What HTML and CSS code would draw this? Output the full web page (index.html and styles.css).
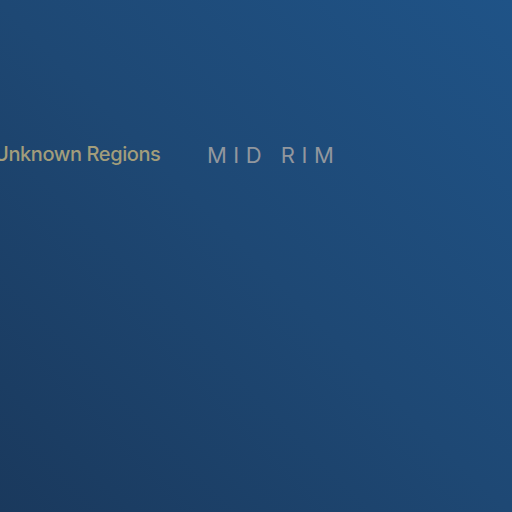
FILE: index.html
```html
<!DOCTYPE html>
<html>
<head>
<meta charset="utf-8">
<link rel="stylesheet" href="styles.css">
</head>
<body>
<div class="map">
  <span class="label region">Unknown Regions</span>
  <span class="label rim">MID RIM</span>
</div>
</body>
</html>
```
FILE: styles.css
```css
html, body { margin: 0; padding: 0; }
body { width: 512px; height: 512px; overflow: hidden; }
.map {
  position: relative;
  width: 512px;
  height: 512px;
  background: linear-gradient(to top right, #1a395d 0%, #1e4874 50%, #1f5387 100%);
  font-family: Inter, "Noto Sans", sans-serif;
}
.label { position: absolute; white-space: nowrap; line-height: 1; }
.region {
  left: -6px;
  top: 144px;
  font-size: 20px;
  font-weight: 500;
  color: #a29d7b;
  letter-spacing: -0.4px;
}
.rim {
  left: 207px;
  top: 144px;
  font-size: 22px;
  font-weight: 400;
  color: #92979e;
  letter-spacing: 6.5px;
}
```
